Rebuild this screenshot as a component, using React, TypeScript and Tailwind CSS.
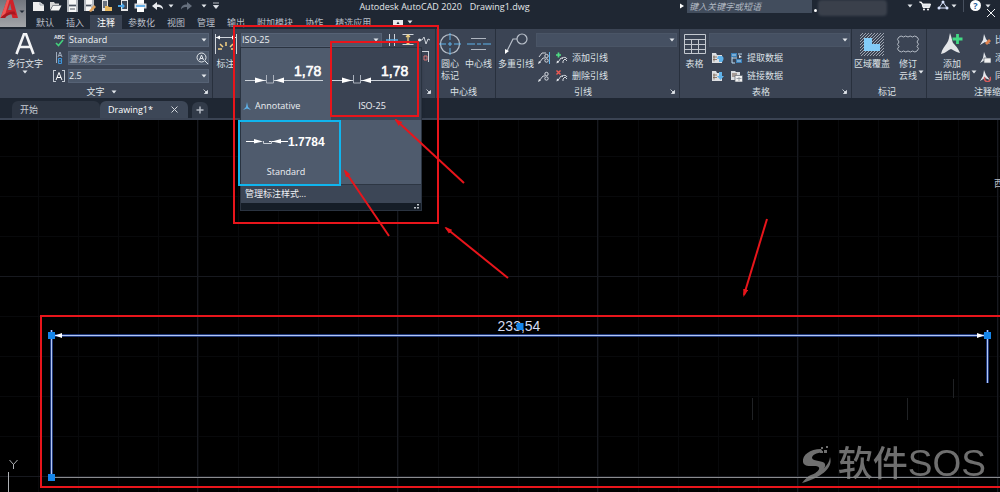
import type { ReactNode } from "react";

const W = "#e3e7ec";
const B = "#5fb2ea";

function Svg({ w, h, children, className = "" }: { w: number; h: number; children: ReactNode; className?: string }) {
  return (
    <svg width={w} height={h} viewBox={`0 0 ${w} ${h}`} fill="none" className={`shrink-0 ${className}`} aria-hidden="true">
      {children}
    </svg>
  );
}

function Caret({ className = "" }: { className?: string }) {
  return (
    <Svg w={6} h={4} className={className}>
      <path d="M0.5 0.5h5L3 3.5z" fill={W} />
    </Svg>
  );
}

function Corner() {
  return (
    <Svg w={5} h={5}>
      <path d="M0.5 0.5l3 3M4.5 1.5v3h-3z" stroke={W} fill={W} strokeWidth="0.8" />
    </Svg>
  );
}

/* ---------- ribbon building blocks ---------- */

function Panel({ title, className, caret, corner, children }: { title?: string; className: string; caret?: boolean; corner?: boolean; children: ReactNode }) {
  return (
    <section className={`flex shrink-0 flex-col border-r border-[#28303d] bg-[#3b4454] ${className}`}>
      <div className="flex h-[56px] items-start pt-1">{children}</div>
      <footer className="flex h-[13px] items-center pr-1">
        <span className="flex flex-1 items-center justify-center gap-1.5 whitespace-nowrap">
          {title}
          {caret && <Caret />}
        </span>
        {corner && <Corner />}
      </footer>
    </section>
  );
}

function Big({ icon, lines, className, caret }: { icon: ReactNode; lines: string[]; className: string; caret?: "below" | "side" }) {
  return (
    <button type="button" className={`relative flex shrink-0 flex-col items-center whitespace-nowrap leading-3 ${className}`}>
      <span className="mb-[3px] flex h-[22px] items-center">{icon}</span>
      {lines.map((l) => (
        <span key={l}>{l}</span>
      ))}
      {caret === "below" && <Caret />}
      {caret === "side" && <Caret className="absolute right-0 bottom-2" />}
    </button>
  );
}

function Combo({ label, value }: { label: string; value: string }) {
  return (
    <div className="relative h-[14px] w-full">
      <select
        aria-label={label}
        className={`block h-full w-full appearance-none border text-[9px] leading-3 text-[#eef0f3] outline-none ${value ? "border-[#566275] bg-[#4c586a]" : "border-[#4a5566] bg-[#455062]"}`}
      >
        <option>{value}</option>
      </select>
      <Caret className="pointer-events-none absolute top-[5px] right-0.5" />
    </div>
  );
}

function Row({ icon, icon2, text }: { icon: ReactNode; icon2: ReactNode; text: string }) {
  return (
    <div className="flex h-[14px] items-center gap-1 pl-0.5">
      <button type="button" aria-label={`${text}选项`}>{icon}</button>
      <button type="button" className="ml-0.5 flex items-center gap-1 whitespace-nowrap">
        {icon2}
        {text}
      </button>
    </div>
  );
}

/* ---------- icons ---------- */

const quick: { name: string; icon: ReactNode }[] = [
  { name: "新建", icon: <Svg w={13} h={12}><path d="M1 2h7l4 3v6H1z" fill="#eeeeee" /><path d="M8 2v3h4" stroke="#9aa1aa" /></Svg> },
  { name: "打开", icon: <Svg w={13} h={12}><path d="M1 10V2h4l1 1.5h4V5H4z" fill="#d6d6d6" /><path d="M1.500 10.500L4 5.500h8.500L10 10.500z" fill="#f4f4f4" /></Svg> },
  { name: "保存", icon: <Svg w={13} h={12}><path d="M1 0h11v12H1z" fill="#b8bcc2" /><path d="M3 0h7v4H3zM3 7h7v5H3z" fill="#f7f7f7" /><path d="M3 5.500h7M4 9h5" stroke="#4b535f" /></Svg> },
  { name: "另存为", icon: <Svg w={13} h={12}><path d="M1 0h10v11H1z" fill="#b8bcc2" /><path d="M3 0h6v4H3zM3 7h5v4H3z" fill="#f7f7f7" /><path d="M6 11l5-6 2 2-5 5z" fill="#e2a45c" /><path d="M3 5.500h5" stroke="#4b535f" /></Svg> },
  { name: "从移动设备打开", icon: <Svg w={13} h={12}><path d="M2 0h6v11H2z" fill="#e5e5e5" /><path d="M3 1h4v7H3z" fill="#6b7380" /><path d="M5 6h3l1 1h3v4H5z" fill="#e9b85e" /></Svg> },
  { name: "保存到移动设备", icon: <Svg w={13} h={12}><path d="M4 0h7v11H4z" fill="#e5e5e5" /><path d="M5 1h5v8H5z" fill="#3c4655" /><path d="M1 5h4V3l3 3-3 3V7H1z" fill="#4aa5e6" /></Svg> },
  { name: "打印", icon: <Svg w={13} h={12}><path d="M3 0h7v4H3z" fill="#fff" /><path d="M0.500 3.500h12v5h-12z" fill="#d9dde2" /><path d="M3 7h7v5H3z" fill="#fff" /><path d="M2 6h9" stroke="#3f9fe8" strokeWidth="1.500" /></Svg> },
  { name: "放弃", icon: <Svg w={13} h={12}><path d="M1 6l5-4v2.500c4 0 6 1.500 6 5-1.500-2-3-2.500-6-2.500V10z" fill="#e8ebef" /></Svg> },
];

const Leader = ({ mark }: { mark: "add" | "del" }) => (
  <Svg w={12} h={12}>
    <path d="M1.500 11L5 6l2 .5M6 6c2-1 4-1 5 1M7 11V9l2-2 2 2" stroke={W} strokeWidth="0.9" />
    <path d="M0.500 11.500L1 8.500l2 1.500z" fill={W} />
    {mark === "add" ? <path d="M2.500 0.500v5M0 3h5" stroke="#4fdd84" strokeWidth="1.700" /> : <path d="M0.500 0.500l4 4M4.500 0.500l-4 4" stroke="#ef5a52" strokeWidth="1.400" />}
  </Svg>
);

const LeaderAlign = ({ bar }: { bar?: boolean }) => (
  <Svg w={12} h={12}>
    <path d="M1 11L5 6h2" stroke={W} strokeWidth="0.9" />
    <path d="M0 12l1-3 2 1.500z" fill={W} />
    <circle cx="8.500" cy="4" r="1.700" stroke={W} strokeWidth="0.9" />
    <circle cx="8.500" cy="8.500" r="1.700" stroke={W} strokeWidth="0.9" />
    {bar && <path d="M11.500 0v12" stroke={B} />}
    {bar && <path d="M1 5l3-4h4" stroke={W} strokeWidth="0.9" />}
  </Svg>
);

const Sheet = ({ flip }: { flip?: boolean }) => (
  <Svg w={13} h={12}>
    <path d="M1 1h4l1 2h5v8H1z" fill="#dddfe2" />
    <path d="M2 5h4M2 7.500h4M3 3.500v6" stroke="#76604f" strokeWidth="0.800" />
    {flip ? <path d="M8 2h3v4h2l-3.500 4L6 6h2z" fill={B} /> : <path d="M7 4h4c2 1 2 4 0 6H8V7H6z" fill={B} />}
  </Svg>
);

const Extract = () => (
  <Svg w={13} h={12}>
    <path d="M1 1h6v4H1zM6 7h6v4H6z" fill="#397fb8" />
    <path d="M2 3h4M8 2h4M2 6h5M7 9h4M2 5v6h3" stroke="#b9dcf5" />
    <path d="M9 3l3 2-3 1z" fill={W} />
  </Svg>
);

const LinkData = () => (
  <Svg w={13} h={12}>
    <path d="M1 1h4l1 1h4v8H1z" fill="#dbdee2" />
    <path d="M2 4h5M2 6h3" stroke="#71594a" />
    <path d="M5 5.500h7.500V12H5z" fill="#f2f2f2" stroke="#5a626e" strokeWidth="0.700" />
    <path d="M6.500 8.500h5M9 7v4" stroke="#838b95" strokeWidth="0.800" />
  </Svg>
);

const Tri = ({ accent }: { accent: ReactNode }) => (
  <Svg w={12} h={12}>
    <path d="M5 0l2 5 4 5-5-2-5 3 3-5z" fill={W} />
    {accent}
  </Svg>
);

/* ---------- dimension style gallery ---------- */

function Preview({ text, compact }: { text: string; compact?: boolean }) {
  if (compact)
    return (
      <Svg w={86} h={26}>
        <path d="M3 13.500h13M26 13.500h19" stroke="#fff" />
        <path d="M11 11l9 2.500-9 2zM38 11l-9 2.500 9 2z" fill="#fff" />
        <path d="M20.500 13v2.500h8V13" stroke="#c8ced6" />
        <text x="45" y="18" fill="#fff" fontSize="12" fontWeight="bold" fontFamily="Liberation Sans">{text}</text>
      </Svg>
    );
  return (
    <Svg w={84} h={28}>
      <path d="M2 20.500h21M31 20.500h49" stroke="#cdd3da" />
      <path d="M12 17.500l10 3-10 2.500zM41 17.500l-9 3 9 2.500z" fill="#fff" />
      <path d="M23.500 15v8h7v-8" stroke="#aab1bc" />
      <text x="51" y="16" fill="#fff" stroke="#fff" strokeWidth="0.600" fontSize="14" fontFamily="Liberation Sans">{text}</text>
    </Svg>
  );
}

function StyleGallery() {
  return (
    <div className="absolute top-[14px] -left-px z-10 w-[182px] border border-[#2a3340] bg-[#4f5b6d] text-[9px] shadow">
      <ul role="listbox" aria-label="标注样式列表" className="grid grid-cols-2">
        <li role="option" aria-selected="false" className="flex h-[72px] flex-col pt-3 pl-0.5">
          <Preview text="1,78" />
          <span className="flex items-center gap-1 pt-2 leading-5">
            <Svg w={8} h={9}><path d="M4 0l1 5 3 3-4-1.500L0 8l3-3z" fill={B} /></Svg>
            Annotative
          </span>
        </li>
        <li role="option" aria-selected="true" className="flex h-[72px] flex-col items-center bg-[#3a4353] pt-3 pr-2">
          <Preview text="1,78" />
          <span className="pt-2 leading-5">ISO-25</span>
        </li>
        <li role="option" aria-selected="false" className="flex h-[64px] flex-col items-center pt-2">
          <Preview text="1.7784" compact />
          <span className="pt-2 leading-5">Standard</span>
        </li>
      </ul>
      <button type="button" className="block h-[19px] w-full border-t border-[#2d3643] bg-[#3c4656] pl-1 text-left">管理标注样式...</button>
      <div className="flex h-[7px] items-end justify-end bg-[#151d27] pr-0.5 pb-px">
        <Svg w={5} h={5}><path d="M3 0h2v1.500H3zM0 3h2v1.500H0zM3 3h2v1.500H3z" fill="#bfc5cc" /></Svg>
      </div>
    </div>
  );
}

/* ---------- page sections ---------- */

function TitleBar() {
  return (
    <div className="flex h-[15px] items-start">
      <div className="flex items-start gap-1 pl-1.5">
        {quick.map((q) => (
          <button key={q.name} type="button" aria-label={q.name} title={q.name}>{q.icon}</button>
        ))}
        <Caret className="mt-1" />
        <button type="button" aria-label="重做" className="ml-0.5">
          <Svg w={13} h={12}><path d="M12 6L7 2v2.500c-4 0-6 1.500-6 5C2.500 7.500 4 7 7 7v3z" fill="#66707e" /></Svg>
        </button>
        <Caret className="mt-1 ml-1" />
        <button type="button" aria-label="自定义快速访问工具栏" className="mt-0.5 ml-0.5">
          <Svg w={6} h={7}><path d="M0 1h6M0.500 3.500h5L3 6.500z" stroke={W} fill={W} strokeWidth="0.800" /></Svg>
        </button>
      </div>
      <h1 className="flex flex-1 justify-center gap-2 pr-2 text-[9px] leading-[14px] whitespace-nowrap text-[#e4e7ea]">
        <span>Autodesk AutoCAD 2020</span>
        <span>Drawing1.dwg</span>
      </h1>
      <div className="flex w-[322px] shrink-0 items-start">
        <Svg w={9} h={12}><path d="M2 3.500l4 2.500-4 2.500z" fill="#fff" /></Svg>
        <input aria-label="搜索" placeholder="键入关键字或短语" className="h-[13px] w-[125px] bg-[#424d5d] px-0.5 text-[9px] italic outline-none placeholder:text-[#b3bac4]" />
        <span className="mt-[9px] ml-0.5 size-[3px] rounded-full bg-white" />
        <span className="ml-px h-[16px] w-[69px] rounded-sm bg-[#414752] opacity-80 blur-[1px]" />
        <Caret className="mt-1 ml-5" />
        <button type="button" aria-label="购物车" className="ml-1.5">
          <Svg w={12} h={12}><path d="M0.500 2h2l1.500 5.500h6.500L11.500 4H4z" stroke="#fff" fill="#dfe3e8" strokeWidth="0.900" /><circle cx="5" cy="9.500" r="1" fill="#fff" /><circle cx="9" cy="9.500" r="1" fill="#fff" /></Svg>
        </button>
        <button type="button" aria-label="应用程序" className="ml-1.5">
          <Svg w={12} h={12}><path d="M6 2L2 8h8z" stroke="#d9e4ff" /><circle cx="6" cy="2" r="1.500" fill="#d9e4ff" /><circle cx="2" cy="8" r="1.500" fill="#d9e4ff" /><circle cx="10" cy="8" r="1.500" fill="#d9e4ff" /></Svg>
        </button>
        <Caret className="mt-1 ml-0.5" />
        <span className="ml-1.5 h-3 w-px bg-[#47505e]" />
        <button type="button" aria-label="帮助" className="ml-1.5 flex size-[11px] items-center justify-center rounded-full bg-white text-[9px] font-bold text-[#1f5f9e]">?</button>
        <Caret className="mt-1 ml-1" />
      </div>
    </div>
  );
}

const menu = ["默认", "插入", "注释", "参数化", "视图", "管理", "输出", "附加模块", "协作", "精选应用"];

function Header() {
  return (
    <header className="relative flex bg-[#1f2733]">
      <button type="button" aria-label="应用程序菜单" className="flex h-[27px] w-[26px] shrink-0 items-start bg-linear-to-b from-[#72767e] to-[#a3a5a9]">
        <Svg w={26} h={26}>
          <path d="M0.500 18L7 0h6l5 18h-5.500l-1.200-4.500H7L5 18z" fill="#cf2229" />
          <path d="M8 10l2.200-6.500L11.500 10z" fill="#767a82" />
          <path d="M7 0h2.500L5 15l-4.500 3z" fill="#f05755" />
          <path d="M0.500 18c4-5 9-6.500 14-6.500l1.500 3.500c-4-1.500-8-1-11 3z" fill="#a81720" />
          <path d="M19.500 10.500h5L22 13z" fill="#222b37" />
        </Svg>
      </button>
      <div className="min-w-0 flex-1">
        <TitleBar />
        <nav aria-label="功能区" className="flex h-[14px] items-stretch pl-1 leading-4">
          {menu.map((m) => (
            <a key={m} href="#" aria-current={m === "注释" ? "page" : undefined} className={m === "注释" ? "bg-[#3b4454] px-[7px] text-white" : "px-[6px] text-[#b9bfc8]"}>{m}</a>
          ))}
          <button type="button" aria-label="最小化功能区" className="ml-4 flex items-center gap-1">
            <Svg w={10} h={7}><path d="M0 1h10v6H0z" fill="#e8ebee" /><path d="M3.500 5L5 2.500 6.500 5z" fill="#1f2733" /></Svg>
            <Caret />
          </button>
        </nav>
      </div>
      <button type="button" aria-label="关闭" className="absolute top-2 right-1">
        <Svg w={10} h={10}><path d="M1 1l8 8M9 1L1 9" stroke="#f1f3f5" /></Svg>
      </button>
    </header>
  );
}

function Ribbon() {
  return (
    <div className="flex h-[69px] overflow-visible bg-[#3b4454]">
      <Panel title="文字" className="w-[213px]" caret corner>
        <Big className="w-[50px]" lines={["多行文字"]} caret="below" icon={<Svg w={20} h={22}><path d="M1.500 21L9 1h2l7.500 20M4.500 14h11" stroke="#f3f4f6" strokeWidth="2.600" /></Svg>} />
        <div className="flex w-[18px] flex-col items-center gap-1">
          <button type="button" aria-label="拼写检查"><Svg w={14} h={14}><text x="2" y="6" fill={W} fontSize="5" fontWeight="bold" fontFamily="Liberation Sans">ABC</text><path d="M4 10l2.500 2.500L11 7" stroke="#43d17c" strokeWidth="1.600" /></Svg></button>
          <button type="button" aria-label="对正"><Svg w={12} h={14}><path d="M3.500 1v11M5 6l2-5 2 5M6 4.500h2" stroke="#aab6c6" strokeWidth="0.900" /><path d="M5.500 7.500h3v5h-3zM5 10h4" stroke="#3f97dd" /></Svg></button>
          <button type="button" aria-label="文字高度"><Svg w={12} h={14}><path d="M0.500 1v12M11.500 1v12M0 1.500h3M9 1.500h3M0 12.500h3M9 12.500h3" stroke="#c5cbd3" /><path d="M3 11l3-7.500L9 11M4 8.500h4" stroke="#fff" /></Svg></button>
        </div>
        <div className="flex w-[141px] flex-col gap-1">
          <Combo label="文字样式" value="Standard" />
          <div className="relative h-[14px]">
            <input aria-label="查找文字" placeholder="查找文字" className="block h-full w-full border border-[#566275] bg-[#4c586a] text-[9px] italic outline-none placeholder:text-[#b5bdc8]" />
            <button type="button" aria-label="查找" className="absolute top-px right-px"><Svg w={12} h={12}><circle cx="5.500" cy="5.500" r="4.500" stroke={W} /><path d="M3.500 8l2-5 2 5M4.300 6.500h2.500M9 9l3 3" stroke={W} /></Svg></button>
          </div>
          <Combo label="文字高度" value="2.5" />
        </div>
      </Panel>

      <Panel className="w-[223px]" corner>
        <Big className="w-[25px]" lines={["标注"]} icon={<Svg w={24} h={22}><path d="M1.500 1v20M22.500 1v20M2 4.500h20" stroke="#cfd4db" /><path d="M2 4.500l4-2v4zM22 4.500l-4-2v4z" fill="#fff" /><path d="M4 16h4M6 11l3 3M12 9v4M19 11l-3 3M17 16h4" stroke="#f3cf83" strokeWidth="1.500" /></Svg>} />
        <div className="relative ml-[3px] w-[141px] text-[#eef0f3]">
          <button type="button" aria-haspopup="listbox" aria-expanded="true" className="flex h-[14px] w-full items-center justify-between border border-[#566275] bg-[#4c586a] pr-0.5 leading-3">
            ISO-25
            <Caret />
          </button>
          <StyleGallery />
        </div>
        <div className="ml-1 grid grid-cols-3 gap-1">
          <button type="button" aria-label="线性"><Svg w={12} h={13}><path d="M3.500 1v12M8.500 1v12" stroke="#cfd4db" /><path d="M0 7h12" stroke={B} strokeWidth="1.400" /></Svg></button>
          <button type="button" aria-label="快速"><Svg w={12} h={13}><path d="M0.500 1.500h11M0.500 11.500h11" stroke="#cfd4db" /><path d="M6 2v9M4 4l2-2 2 2M4 9l2 2 2-2" stroke="#efcf7e" strokeWidth="1.300" /></Svg></button>
          <button type="button" aria-label="折弯"><Svg w={12} h={13}><path d="M1 7h3l2-3 2 7 2-5 2 1" stroke="#cfd4db" /><circle cx="1.500" cy="7" r="1.500" fill={W} /></Svg></button>
          <span />
          <span />
          <button type="button" aria-label="公差"><Svg w={12} h={13}><path d="M10.500 1v11M0 1.500h10" stroke="#cfd4db" /><path d="M6 6h3v4H6z" stroke="#da7575" /></Svg></button>
        </div>
      </Panel>

      <Panel title="中心线" className="w-[60px]">
        <Big className="w-[28px]" lines={["圆心", "标记"]} icon={<Svg w={22} h={22}><circle cx="11" cy="11" r="9.500" stroke="#b9c0ca" strokeWidth="1.200" /><path d="M11 0v7M11 9v4M11 15v7M0 11h7M9 11h4M15 11h7" stroke={B} /></Svg>} />
        <Big className="w-[29px]" lines={["中心线"]} icon={<Svg w={24} h={22}><path d="M4 5.500h15M4 16.500h15" stroke="#aeb5bf" strokeWidth="1.200" /><path d="M0 11h8M10 11h4M16 11h8" stroke={B} /></Svg>} />
      </Panel>

      <Panel title="引线" className="w-[184px]" corner>
        <Big className="w-[40px]" lines={["多重引线"]} icon={<Svg w={24} h={22}><circle cx="18" cy="6" r="5" stroke="#b9c0ca" strokeWidth="1.200" /><path d="M13 6H9L3 18" stroke="#b9c0ca" strokeWidth="1.200" /><path d="M1 21v-5l4 2z" fill="#fff" /></Svg>} />
        <div className="flex w-[141px] flex-col gap-1">
          <Combo label="多重引线样式" value="" />
          <Row icon={<LeaderAlign bar />} icon2={<Leader mark="add" />} text="添加引线" />
          <Row icon={<LeaderAlign />} icon2={<Leader mark="del" />} text="删除引线" />
        </div>
      </Panel>

      <Panel title="表格" className="w-[172px]" corner>
        <Big className="w-[29px]" lines={["表格"]} icon={<Svg w={22} h={22}><path d="M0.500 1.500h21v19h-21zM0.500 6.500h21M0.500 11.500h21M0.500 16.500h21M7.500 6v15M14.500 6v15" stroke="#c3c8cf" /></Svg>} />
        <div className="flex w-[141px] flex-col gap-1">
          <Combo label="表格样式" value="" />
          <Row icon={<Sheet />} icon2={<Extract />} text="提取数据" />
          <Row icon={<Sheet flip />} icon2={<LinkData />} text="链接数据" />
        </div>
      </Panel>

      <Panel title="标记" className="w-[75px]">
        <Big
          className="w-[40px]"
          lines={["区域覆盖"]}
          icon={
            <Svg w={24} h={23}>
              <defs>
                <pattern id="hatch" width="3" height="3" patternUnits="userSpaceOnUse">
                  <path d="M0 3L3 0" stroke="#a9b0bb" strokeWidth="0.900" />
                </pattern>
              </defs>
              <path d="M0 0h24v23H0z" fill="url(#hatch)" />
              <path d="M4 5h8v6h8v7H4z" fill="#83ccf8" />
            </Svg>
          }
        />
        <Big className="w-[32px]" lines={["修订", "云线"]} caret="side" icon={<Svg w={24} h={20}><path d="M3 3q2-2 4.500 0q2-2 4.500 0q2-2 4.500 0q2-2 4.500 0q3 2 0 5q3 2 0 4.500q3 2 0 4.500q-2 2-4.500 0q-2 2-4.500 0q-2 2-4.500 0q-2 2-4.500 0q-3-2 0-4.500q-3-2 0-4.500q-3-3 0-5z" stroke="#b4bbc5" /></Svg>} />
      </Panel>

      <section aria-label="注释缩放" className="flex min-w-0 flex-1 flex-col overflow-hidden">
        <div className="flex h-[56px] items-start pt-1">
          <Big className="w-[50px]" lines={["添加", "当前比例"]} caret="side" icon={<Svg w={24} h={22}><path d="M10 0c2 5 2 8 3 10 3 3 5 5 7 10-5-1-6-3-9-4-3 1-5 4-10 5 1-5 4-8 6-11 2-3 2-6 3-10z" fill="#e4e6e9" /><path d="M17.500 1v10M12.500 6h10" stroke="#43d984" strokeWidth="2.800" /></Svg>} />
          <div className="ml-0.5 flex flex-col gap-1">
            {[
              { t: "比例列表", a: <path d="M6 9l4-4 2 2-4 4z" fill="#df814e" /> },
              { t: "添加比例", a: <path d="M5 6h7v5H5z" fill="#f1f1f1" stroke="#5a626e" strokeWidth="0.700" /> },
              { t: "同步位置", a: <path d="M6 7a3 3 0 1 0 5 0" stroke="#d85a5a" strokeWidth="1.500" /> },
            ].map((r) => (
              <button key={r.t} type="button" className="flex h-[14px] items-center gap-1 whitespace-nowrap">
                <Tri accent={r.a} />
                {r.t}
              </button>
            ))}
          </div>
        </div>
        <footer className="flex h-[13px] items-center pl-[47px] whitespace-nowrap">注释缩放</footer>
      </section>
    </div>
  );
}

function DocTabs() {
  return (
    <nav aria-label="文档" className="flex h-[22px] items-end border-b-2 border-[#3a4353] bg-[#1f2733] pl-3">
      <a href="#" className="flex h-[17px] w-[88px] items-center rounded-t-md bg-[#2d3542] pl-2 text-[#c6cbd2]">开始</a>
      <div className="flex h-[17px] w-[88px] items-center justify-between rounded-t-md bg-[#3d4757] pr-2.5 pl-2">
        <a href="#" aria-current="page" className="text-white">Drawing1*</a>
        <button type="button" aria-label="关闭 Drawing1"><Svg w={7} h={7}><path d="M0.500 0.500l6 6M6.500 0.500l-6 6" stroke="#d3d7dc" /></Svg></button>
      </div>
      <button type="button" aria-label="新图形" className="ml-1 flex h-[16px] w-[16px] items-center justify-center rounded-t-md bg-[#323b49]">
        <Svg w={8} h={8}><path d="M4 0.500v7M0.500 4h7" stroke="#b4bac3" strokeWidth="1.500" /></Svg>
      </button>
    </nav>
  );
}

const Grip = ({ x, y }: { x: number; y: number }) => <rect x={x - 3.5} y={y - 3.5} width="7" height="7" fill="#1585ea" />;

function Drawing() {
  return (
    <main className="relative flex-1 overflow-hidden bg-black">
      <svg className="absolute inset-0 h-full w-full" role="img" aria-label="模型空间">
        <defs>
          <pattern id="minor" x="-2" y="-4" width="40" height="40" patternUnits="userSpaceOnUse">
            <path d="M0.500 0v40M0 0.500h40" stroke="#08090b" />
          </pattern>
          <pattern id="major" x="-3" y="-44" width="200" height="200" patternUnits="userSpaceOnUse">
            <path d="M0.500 0v200M0 0.500h200" stroke="#17191f" />
          </pattern>
        </defs>
        <rect width="100%" height="100%" fill="url(#minor)" />
        <rect width="100%" height="100%" fill="url(#major)" />
        <path d="M752.500 278v22M907.500 278v22M953.500 259v19" stroke="#202225" />

        <path d="M52 357.500H2000" stroke="#8a8b8e" />
        <path d="M52 215.500H987M51.500 210V358M987.500 210v53" fill="none" stroke="#20397a" strokeWidth="3" />
        <path d="M52 215.500H987M51.500 210V358M987.500 210v53" fill="none" stroke="#b3c7f3" />
        <path d="M55 215.500l7-2.500v5zM984 215.500l-7-2.500v5z" fill="#fff" />
        <text x="519" y="211" textAnchor="middle" fill="#d5dbf2" fontSize="14" fontFamily="Liberation Sans">233,54</text>
        <Grip x={51.5} y={215.5} />
        <Grip x={51.5} y={357.5} />
        <Grip x={987.5} y={215.5} />
        <Grip x={520} y={206.5} />

        <path d="M8.500 352v21M9.500 340l4 4.500 4-4.500M13.500 344v5" stroke="#aeb1b5" fill="none" />
      </svg>
      <span className="absolute top-[56px] -right-1 text-[10px] text-[#b9bcc0]">西</span>
      <div className="absolute right-3.5 bottom-1.5 flex items-center gap-1.5 text-[#8b8b8b] opacity-80">
        <Svg w={30} h={38}>
          <path d="M19 4C8 4 0 10 1 17c1 5 8 4 13 4 5 1 4 4-2 8 8-2 12-6 11-10-1-4-12-2-13-6 0-3 4-5 11-6z" fill="currentColor" />
          <path d="M28 12c3 9-5 19-28 26 3-4 6-7 9-8 11-4 18-9 19-18z" fill="currentColor" />
          <path d="M19 2h2v2h-2zM22 5h3v3h-3zM18 6h3v2h-3zM24 1h2v2h-2z" fill="currentColor" />
        </Svg>
        <span className="text-[35px] leading-[44px] font-medium">
          软件<span className="font-['Liberation_Sans'] text-[37px]">SOS</span>
        </span>
      </div>
    </main>
  );
}

const arrows = [
  { x: 396, y: 120, tx: 464, ty: 183 },
  { x: 345, y: 171, tx: 389, ty: 236 },
  { x: 446, y: 228, tx: 508, ty: 278 },
  { x: 744, y: 295, tx: 767, ty: 219 },
];

function Markup() {
  return (
    <svg className="pointer-events-none absolute inset-0 z-20 h-full w-full" aria-hidden="true">
      <defs>
        <marker id="head" markerWidth="4" markerHeight="3" refX="3" refY="1.500" orient="auto">
          <path d="M0 0.200L4 1.500 0 2.800z" fill="#e8151b" />
        </marker>
      </defs>
      <g fill="none" stroke="#e8151b" strokeWidth="2">
        <rect x="234" y="26" width="204" height="197" />
        <rect x="331" y="42" width="87" height="74" />
        <rect x="41" y="316" width="1960" height="171" />
        {arrows.map((a) => (
          <path key={a.x} d={`M${a.tx} ${a.ty}L${a.x} ${a.y}`} markerEnd="url(#head)" />
        ))}
      </g>
      <rect x="239" y="121" width="101" height="64" fill="none" stroke="#10b5ee" strokeWidth="2" />
    </svg>
  );
}

export default function App() {
  return (
    <div className="relative flex min-h-screen flex-col overflow-hidden bg-black font-['Open_Sans','Noto_Sans_CJK_SC',sans-serif] text-[9px] text-[#dde1e6]">
      <Header />
      <Ribbon />
      <DocTabs />
      <Drawing />
      <Markup />
    </div>
  );
}
